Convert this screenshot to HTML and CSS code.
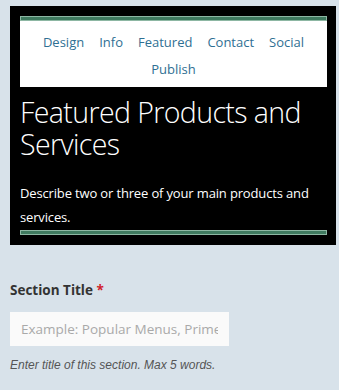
FILE: index.html
```html
<!DOCTYPE html>
<html>
<head>
<meta charset="utf-8">
<link rel="stylesheet" href="styles.css">
</head>
<body>
<div class="preview">
  <div class="rule"></div>
  <nav class="nav">
    <a>Design</a>
    <a>Info</a>
    <a>Featured</a>
    <a>Contact</a>
    <a>Social</a>
    <a>Publish</a>
  </nav>
  <h1 class="title">Featured Products and Services</h1>
  <p class="desc">Describe two or three of your main products and services.</p>
  <div class="rule"></div>
</div>
<div class="field">
  <label class="label">Section Title <span class="req">*</span></label>
  <div class="input"><div class="clip">Example: Popular Menus, Prime Cuts</div></div>
  <div class="help">Enter title of this section. Max 5 words.</div>
</div>
</body>
</html>
```
FILE: styles.css
```css
html, body { margin: 0; padding: 0; }
body {
  background: #d8e2ea;
  font-family: "Open Sans", "Noto Sans", sans-serif;
  width: 339px;
  height: 390px;
  overflow: hidden;
}
.preview {
  margin: 6px 3px 0 10px;
  width: 326px;
  height: 239px;
  box-sizing: border-box;
  background: #000;
  padding: 10px 9px 0 10px;
}
.rule {
  height: 5px;
  box-sizing: border-box;
  border: 1px solid #8db7a3;
  background: #3f7a5f;
}
.nav {
  background: #fff;
  height: 66px;
  box-sizing: border-box;
  padding: 8px 20px 0;
  display: flex;
  flex-wrap: wrap;
  justify-content: center;
  align-content: flex-start;
  column-gap: 15px;
  line-height: 27px;
  font-size: 13px;
  color: #2f6f93;
}
.title {
  margin: 9px 0 0;
  color: #fff;
  font-weight: 300;
  font-size: 28.5px;
  line-height: 32px;
  letter-spacing: -0.6px;
}
.desc {
  margin: 21px 0 1px;
  color: #fff;
  font-size: 13px;
  letter-spacing: -0.15px;
  line-height: 24px;
}
.field { padding: 35px 0 0 10px; }
.label {
  display: block;
  font-weight: 700;
  font-size: 13.5px;
  line-height: 20px;
  color: #333;
}
.req { color: #d0202a; }
.input {
  margin-top: 12px;
  width: 219px;
  height: 34px;
  box-sizing: border-box;
  background: #fafafa;
  padding: 0 0 0 11px;
  line-height: 34px;
  font-size: 13.5px;
  color: #a9a9a9;
}
.clip {
  width: 197px;
  overflow: hidden;
  white-space: nowrap;
}
.help {
  margin-top: 12px;
  font-family: "Liberation Sans", Arial, sans-serif;
  font-style: italic;
  font-size: 12px;
  color: #555;
}
```
